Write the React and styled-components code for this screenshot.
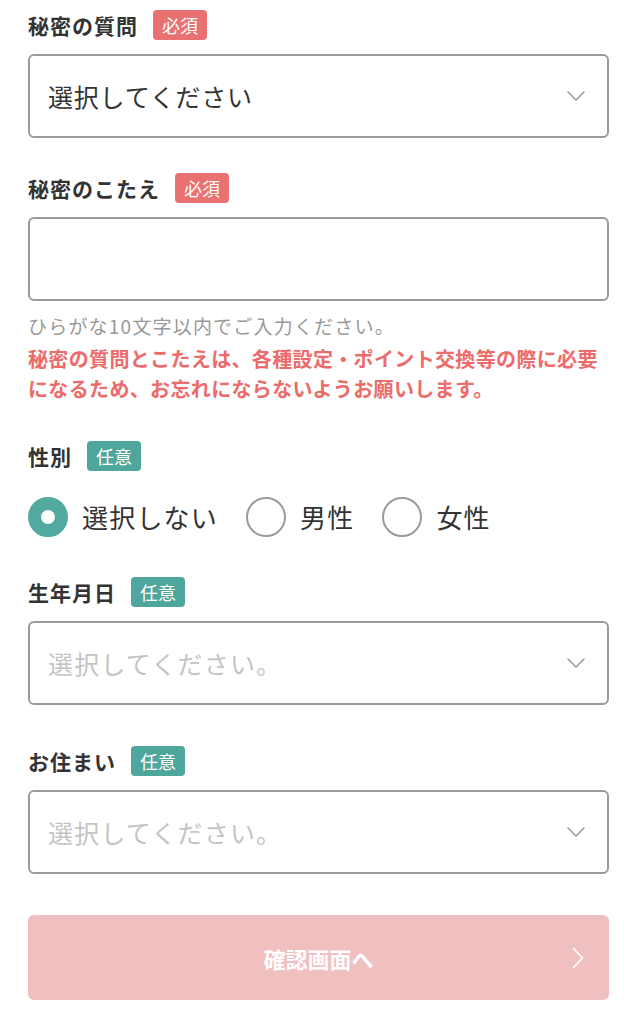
import React, { useState } from "react";
import styled, { createGlobalStyle } from "styled-components";

const GlobalStyle = createGlobalStyle`
  html, body {
    margin: 0;
    padding: 0;
    background: #fff;
  }
  body {
    font-family: "Noto Sans CJK JP", "Noto Sans", sans-serif;
    color: #333;
  }
`;

const Chevron = ({ dir = "down", color = "#999" }) =>
  dir === "down" ? (
    <svg width="18" height="10" viewBox="0 0 18 10" fill="none">
      <path d="M1 1l8 8 8-8" stroke={color} strokeWidth="1.5" strokeLinecap="round" strokeLinejoin="round" />
    </svg>
  ) : (
    <svg width="12" height="22" viewBox="0 0 12 22" fill="none">
      <path d="M1.5 1.5l9 9.5-9 9.5" stroke={color} strokeWidth="1.8" strokeLinecap="round" strokeLinejoin="round" />
    </svg>
  );

const App = () => {
  const [gender, setGender] = useState("none");
  const genders = [
    { key: "none", label: "選択しない" },
    { key: "male", label: "男性" },
    { key: "female", label: "女性" },
  ];

  return (
    <Page>
      <GlobalStyle />
      <Field>
        <LabelRow>
          <Label>秘密の質問</Label>
          <Badge required>必須</Badge>
        </LabelRow>
        <SelectBox>
          <SelectText>選択してください</SelectText>
          <Chevron />
        </SelectBox>
      </Field>

      <Field gap={35}>
        <LabelRow>
          <Label>秘密のこたえ</Label>
          <Badge required>必須</Badge>
        </LabelRow>
        <TextInput type="text" />
        <Hint>ひらがな10文字以内でご入力ください。</Hint>
        <Note>
          秘密の質問とこたえは、各種設定・ポイント交換等の際に必要になるため、お忘れにならないようお願いします。
        </Note>
      </Field>

      <Field gap={37}>
        <LabelRow>
          <Label>性別</Label>
          <Badge>任意</Badge>
        </LabelRow>
        <RadioRow>
          {genders.map((g) => (
            <RadioItem key={g.key} onClick={() => setGender(g.key)}>
              <RadioCircle checked={gender === g.key} />
              <RadioLabel>{g.label}</RadioLabel>
            </RadioItem>
          ))}
        </RadioRow>
      </Field>

      <Field gap={40}>
        <LabelRow>
          <Label>生年月日</Label>
          <Badge>任意</Badge>
        </LabelRow>
        <SelectBox>
          <SelectText placeholder>選択してください。</SelectText>
          <Chevron />
        </SelectBox>
      </Field>

      <Field gap={41}>
        <LabelRow>
          <Label>お住まい</Label>
          <Badge>任意</Badge>
        </LabelRow>
        <SelectBox>
          <SelectText placeholder>選択してください。</SelectText>
          <Chevron />
        </SelectBox>
      </Field>

      <SubmitButton disabled>
        <span>確認画面へ</span>
        <ButtonArrow>
          <Chevron dir="right" color="#fff" />
        </ButtonArrow>
      </SubmitButton>
    </Page>
  );
};

const Page = styled.main`
  width: 637px;
  box-sizing: border-box;
  padding: 10px 28px 24px;
`;

const Field = styled.section`
  margin-top: ${(p) => p.gap || 0}px;
  display: flex;
  flex-direction: column;
`;

const LabelRow = styled.div`
  display: flex;
  align-items: center;
  gap: 15px;
  height: 30px;
  margin-bottom: 14px;
`;

const Label = styled.span`
  font-size: 21px;
  font-weight: bold;
  color: #333;
  letter-spacing: 1px;
`;

const Badge = styled.span`
  display: inline-flex;
  align-items: center;
  justify-content: center;
  height: 30px;
  padding: 0 9px;
  border-radius: 4px;
  font-size: 18px;
  color: #fff;
  background: ${(p) => (p.required ? "#ea7171" : "#4fa69c")};
`;

const SelectBox = styled.div`
  height: 84px;
  box-sizing: border-box;
  border: 2px solid #9a9a9a;
  border-radius: 6px;
  display: flex;
  align-items: center;
  justify-content: space-between;
  padding: 0 22px 0 18px;
  background: #fff;
`;

const SelectText = styled.span`
  font-size: 25px;
  color: ${(p) => (p.placeholder ? "#c4c4c4" : "#333")};
  letter-spacing: ${(p) => (p.placeholder ? "1.2px" : "0.8px")};
`;

const TextInput = styled.input`
  height: 84px;
  box-sizing: border-box;
  border: 2px solid #9a9a9a;
  border-radius: 6px;
  padding: 0 18px;
  font-size: 24px;
  font-family: inherit;
  outline: none;
`;

const Hint = styled.p`
  margin: 12px 0 0;
  font-size: 19px;
  line-height: 26px;
  letter-spacing: 1.2px;
  color: #999;
`;

const Note = styled.p`
  margin: 5px 0 0;
  font-size: 20px;
  line-height: 30px;
  font-weight: bold;
  color: #ec6b6b;
  letter-spacing: 0.35px;
`;

const RadioRow = styled.div`
  display: flex;
  align-items: center;
  gap: 28px;
  margin-top: 12px;
`;

const RadioItem = styled.label`
  display: flex;
  align-items: center;
  gap: 14px;
  cursor: pointer;
`;

const RadioCircle = styled.span`
  width: 40px;
  height: 40px;
  box-sizing: border-box;
  border-radius: 50%;
  border: ${(p) => (p.checked ? "13px solid #52a99f" : "2px solid #9a9a9a")};
  background: #fff;
`;

const RadioLabel = styled.span`
  font-size: 26px;
  line-height: 36px;
  color: #333;
  letter-spacing: 1.2px;
`;

const SubmitButton = styled.button`
  position: relative;
  margin-top: 41px;
  width: 100%;
  height: 85px;
  border: none;
  border-radius: 6px;
  background: #f0c0c0;
  color: #fff;
  font-family: inherit;
  font-size: 22px;
  font-weight: bold;
  display: flex;
  align-items: center;
  justify-content: center;
`;

const ButtonArrow = styled.span`
  position: absolute;
  right: 25px;
  top: 50%;
  transform: translateY(-50%);
  display: flex;
`;

export default App;
